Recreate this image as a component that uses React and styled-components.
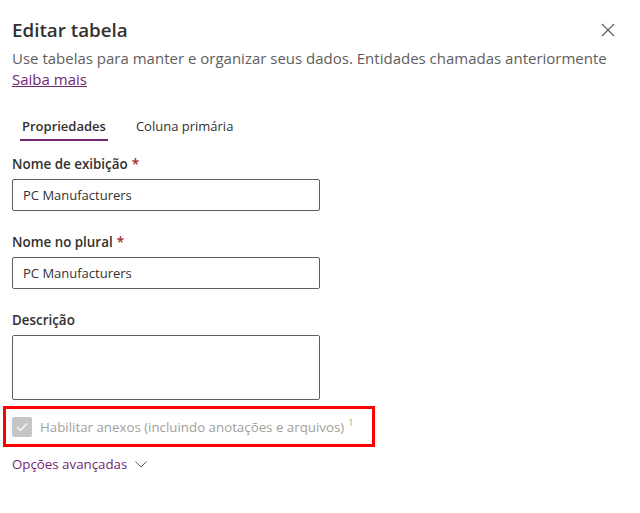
import React from "react";
import styled, { createGlobalStyle } from "styled-components";

const GlobalStyle = createGlobalStyle`
  html, body {
    margin: 0;
    padding: 0;
    background: #ffffff;
  }
  body {
    font-family: "Open Sans", "Noto Sans", sans-serif;
    color: #323130;
  }
`;

const Panel = styled.div`
  width: 640px;
  height: 513px;
  box-sizing: border-box;
  padding: 16px 12px 0 12px;
  display: flex;
  flex-direction: column;
`;

const Header = styled.div`
  display: flex;
  justify-content: space-between;
  align-items: flex-start;
`;

const Title = styled.h1`
  margin: 0;
  font-size: 18.8px;
  line-height: 28px;
  font-weight: 600;
  color: #323130;
`;

const CloseButton = styled.button`
  border: none;
  background: none;
  padding: 0;
  margin: 7px 13px 0 0;
  width: 14px;
  height: 14px;
  display: flex;
  cursor: pointer;
`;

const Intro = styled.p`
  margin: 4px 0 0 0;
  font-size: 15px;
  line-height: 21px;
  color: #605e5c;
  white-space: nowrap;
`;

const Link = styled.a`
  color: #742774;
  text-decoration: underline;
  cursor: pointer;
`;

const Tabs = styled.div`
  display: flex;
  gap: 26px;
  margin: 26px 0 0 8px;
`;

const Tab = styled.div`
  position: relative;
  padding: 0 2px 5px 2px;
  font-size: 13px;
  line-height: 20px;
  font-weight: ${(p) => (p.active ? 600 : 400)};
  color: #323130;
  &::after {
    content: "";
    position: absolute;
    left: 0;
    right: 0;
    bottom: 0;
    height: 2px;
    background: ${(p) => (p.active ? "#742774" : "transparent")};
  }
`;

const Field = styled.div`
  display: flex;
  flex-direction: column;
  margin-top: ${(p) => p.top}px;
`;

const Label = styled.label`
  font-size: 13.4px;
  line-height: 20px;
  font-weight: 600;
  color: #323130;
  margin-bottom: 5px;
`;

const Required = styled.span`
  color: #a4262c;
  margin-left: 4px;
`;

const TextInput = styled.input`
  box-sizing: border-box;
  width: 308px;
  height: 32px;
  border: 1px solid #605e5c;
  border-radius: 2px;
  padding: 0 10px;
  font-family: inherit;
  font-size: 13px;
  color: #323130;
  outline: none;
`;

const TextArea = styled.textarea`
  box-sizing: border-box;
  width: 308px;
  height: 65px;
  border: 1px solid #605e5c;
  border-radius: 2px;
  resize: none;
  outline: none;
  font-family: inherit;
`;

const Highlight = styled.div`
  margin: 6px 0 0 -9px;
  width: 372px;
  height: 41px;
  box-sizing: border-box;
  border: 3px solid #ff0000;
  display: flex;
  align-items: center;
  padding-left: 6px;
  gap: 8px;
`;

const CheckBox = styled.span`
  flex: none;
  width: 20px;
  height: 20px;
  border-radius: 2px;
  background: #c8c6c4;
  display: flex;
  align-items: center;
  justify-content: center;
`;

const CheckLabel = styled.span`
  font-size: 13.3px;
  line-height: 20px;
  color: #a19f9d;
  white-space: nowrap;
  sup {
    font-size: 9px;
    margin-left: 4px;
    vertical-align: 6px;
    line-height: 0;
  }
`;

const Advanced = styled.div`
  display: flex;
  align-items: center;
  gap: 8px;
  margin-top: 7px;
  font-size: 13.3px;
  line-height: 20px;
  color: #742774;
  cursor: pointer;
`;

export default function App() {
  return (
    <>
      <GlobalStyle />
      <Panel>
        <Header>
          <Title>Editar tabela</Title>
          <CloseButton aria-label="Fechar">
            <svg width="14" height="14" viewBox="0 0 14 14">
              <path d="M1 1 L13 13 M13 1 L1 13" stroke="#605e5c" strokeWidth="1.1" fill="none" />
            </svg>
          </CloseButton>
        </Header>
        <Intro>
          Use tabelas para manter e organizar seus dados. Entidades chamadas anteriormente
          <br />
          <Link>Saiba mais</Link>
        </Intro>
        <Tabs>
          <Tab active>Propriedades</Tab>
          <Tab>Coluna primária</Tab>
        </Tabs>
        <Field top={13}>
          <Label>
            Nome de exibição<Required>*</Required>
          </Label>
          <TextInput defaultValue="PC Manufacturers" />
        </Field>
        <Field top={21}>
          <Label>
            Nome no plural<Required>*</Required>
          </Label>
          <TextInput defaultValue="PC Manufacturers" />
        </Field>
        <Field top={21}>
          <Label>Descrição</Label>
          <TextArea />
        </Field>
        <Highlight>
          <CheckBox>
            <svg width="12" height="10" viewBox="0 0 12 10">
              <path d="M1 5 L4.5 8.5 L11 1.5" stroke="#ffffff" strokeWidth="1.2" fill="none" />
            </svg>
          </CheckBox>
          <CheckLabel>
            Habilitar anexos (incluindo anotações e arquivos)<sup>1</sup>
          </CheckLabel>
        </Highlight>
        <Advanced>
          Opções avançadas
          <svg width="12" height="7" viewBox="0 0 12 7">
            <path d="M0.5 0.5 L6 6 L11.5 0.5" stroke="#605e5c" strokeWidth="1" fill="none" />
          </svg>
        </Advanced>
      </Panel>
    </>
  );
}
